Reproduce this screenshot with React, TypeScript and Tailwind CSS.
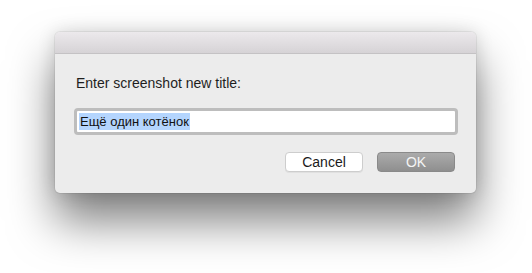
export default function App() {
  return (
    <div className="h-[273px] w-[532px] overflow-hidden bg-white pl-[55px] pt-[32px] font-['Liberation_Sans',Arial,sans-serif]">
      <div className="flex h-[161px] w-[421px] flex-col rounded-[5px] bg-[#ececec] shadow-[0_28px_46px_rgba(0,0,0,0.5),0_0_18px_rgba(0,0,0,0.14),0_0_0_1px_rgba(0,0,0,0.06)]">
        <div className="h-[22px] rounded-t-[5px] border-b border-[#c4c2c4] bg-gradient-to-b from-[#ece9ec] to-[#d6d3d6]" />
        <div className="flex flex-1 flex-col px-[19px] pt-[21px]">
          <p className="pl-[2px] text-[14px] leading-[16px] text-[#1e1e1e]">Enter screenshot new title:</p>
          <div className="mt-[17px] h-[27px] w-[384px] rounded-[4px] bg-[#bdbdbd] p-[3px]">
            <div className="flex h-full items-center rounded-[1px] bg-white pl-[2px]">
              <span className="bg-[#b4d5fe] px-[1px] text-[13px] leading-[17px] text-[#111]">Ещё один котёнок</span>
            </div>
          </div>
          <div className="mt-[17px] flex justify-end gap-[14px] pr-[2px]">
            <button className="h-[20px] w-[78px] rounded-[4px] border border-[#cdcdcd] bg-white text-[14px] leading-[18px] text-[#1a1a1a] shadow-[0_1px_0_rgba(0,0,0,0.05)]">
              Cancel
            </button>
            <button className="h-[20px] w-[78px] rounded-[4px] border border-[#8a8a8a] bg-gradient-to-b from-[#ababab] to-[#8f8f8f] text-[14px] leading-[18px] text-[#f4f4f4]">
              OK
            </button>
          </div>
        </div>
      </div>
    </div>
  );
}
